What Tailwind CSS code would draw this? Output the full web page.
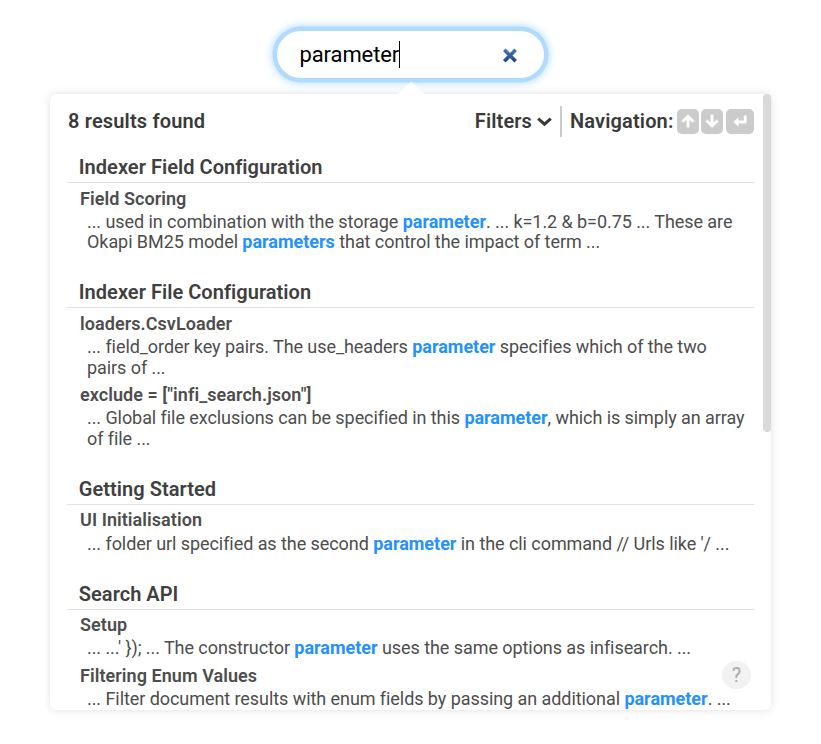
<!DOCTYPE html>
<html lang="en">
<head>
<meta charset="utf-8">
<title>Search</title>
<script src="https://cdn.jsdelivr.net/npm/@tailwindcss/browser@4"></script>
</head>
<body class="h-[744px] overflow-hidden bg-white font-[Roboto,sans-serif] text-[#4d4d4d]">
<div class="flex flex-col items-center pt-[31px]">
  <div class="flex h-[47px] w-[267px] items-center justify-between rounded-full bg-white pr-[26px] pl-[22.5px] shadow-[0_0_0_4.5px_#b0dbff,0_0_8px_5px_#b0dbff]">
    <div class="flex items-center text-[22px] text-black"><span class="tracking-[-0.1px]">parameter</span><span class="h-[27px] w-px bg-black"></span></div>
    <svg class="h-4 w-4" viewBox="0 0 16 16" fill="none"><defs><linearGradient id="g" x1="0" y1="0" x2="0" y2="16" gradientUnits="userSpaceOnUse"><stop stop-color="#4a80c8"/><stop offset="1" stop-color="#233f78"/></linearGradient></defs><path d="M2.3 2.8 13.7 14.2M13.7 2.8 2.3 14.2" stroke="url(#g)" stroke-width="3.7"/></svg>
  </div>
</div>
<main class="relative mt-4 ml-[50px] h-[616px] w-[721px] rounded-md bg-white shadow-[0_0_8px_rgba(0,0,0,0.13)]">
  <svg class="absolute -top-3 left-[348px] h-3 w-[26px]" viewBox="0 0 26 12"><path d="M0 12 11.5 1Q13 -.5 14.5 1L26 12Z" fill="#fff"/></svg>
  <div class="absolute top-0 right-0 h-[338px] w-2 rounded-full bg-[#d9d9d9]"></div>
  <div class="h-full overflow-hidden rounded-md pr-[17px] pl-[17px]">
    <header class="flex h-[54px] items-center justify-between pl-px text-[20px] font-semibold text-[#3a3a3a]">
      <span class="tracking-[0.16px]">8 results found</span>
      <div class="flex items-center">
        <span class="tracking-[0.12px]">Filters</span>
        <svg class="mt-[2px] ml-[5px] h-[10px] w-[15px]" viewBox="0 0 15 10" fill="none" stroke="#3a3a3a" stroke-width="3"><path d="M1.2 1.7 7.5 7.2 13.8 1.7"/></svg>
        <span class="ml-[8px] h-[31px] w-[2px] bg-[#c9c9c9]"></span>
        <span class="ml-[8px] tracking-[0.14px]">Navigation:</span>
        <span class="ml-[3.5px] flex h-[25px] w-[22px] items-center justify-center rounded-[5px] bg-[#cbcbcb]"><svg class="h-[14px] w-[14px]" viewBox="0 0 14 14" fill="none" stroke="#fff" stroke-width="2.8"><path d="M7 13.5V2.5M1.5 7.8 7 2.3l5.5 5.5"/></svg></span>
        <span class="ml-[2px] flex h-[25px] w-[22px] items-center justify-center rounded-[5px] bg-[#cbcbcb]"><svg class="h-[14px] w-[14px]" viewBox="0 0 14 14" fill="none" stroke="#fff" stroke-width="2.8"><path d="M7 .5v11.2M1.5 6.4 7 11.9l5.5-5.5"/></svg></span>
        <span class="ml-[3px] flex h-[25px] w-[28px] items-center justify-center rounded-[5px] bg-[#cbcbcb]"><svg class="h-[12px] w-[14px]" viewBox="0 0 14 12"><path d="M12.2 .5v6.5H4" fill="none" stroke="#fff" stroke-width="2.8"/><path d="M0.3 7 5.5 2.2v9.6Z" fill="#fff"/></svg></span>
      </div>
    </header>

    <section class="-mt-[18.5px]">
      <h2 class="border-b border-[#e1e1e1] pt-[26.5px] pb-[3px] pl-[11.8px] text-[20px] leading-[23px] font-semibold tracking-[0.04px] text-[#404040]">Indexer Field Configuration</h2>
      <div class="pt-[5.5px] pb-[1.8px] pl-[13px] text-[18px] leading-[20.7px]">
        <h3 class="font-semibold tracking-[0.06px]">Field Scoring</h3>
        <p class="pt-[2.3px] pl-[7px] tracking-[-0.065px]">... used in combination with the storage <b class="font-bold tracking-[-0.02px] text-[#2491ff]">parameter</b>. ... k=1.2 &amp; b=0.75 ... These are<br>Okapi BM25 model <b class="font-bold tracking-[-0.02px] text-[#2491ff]">parameters</b> that control the impact of term ...</p>
      </div>
    </section>
    <section>
      <h2 class="border-b border-[#e1e1e1] pt-[26.5px] pb-[3px] pl-[11.8px] text-[20px] leading-[23px] font-semibold tracking-[0.04px] text-[#404040]">Indexer File Configuration</h2>
      <div class="pt-[5.5px] pb-[1.4px] pl-[13px] text-[18px] leading-[20.7px]">
        <h3 class="font-semibold tracking-[0.06px]">loaders.CsvLoader</h3>
        <p class="pt-[2.7px] pl-[7px] tracking-[-0.07px]">... field_order key pairs. The use_headers <b class="font-bold tracking-[-0.02px] text-[#2491ff]">parameter</b> specifies which of the two<br>pairs of ...</p>
      </div>
      <div class="pt-[5.5px] pb-[1.8px] pl-[13px] text-[18px] leading-[20.7px]">
        <h3 class="font-semibold tracking-[0.06px]">exclude = ["infi_search.json"]</h3>
        <p class="pt-[2.3px] pl-[7px] tracking-[-0.07px]">... Global file exclusions can be specified in this <b class="font-bold tracking-[-0.02px] text-[#2491ff]">parameter</b>, which is simply an array<br>of file ...</p>
      </div>
    </section>
    <section>
      <h2 class="border-b border-[#e1e1e1] pt-[26.5px] pb-[3px] pl-[11.8px] text-[20px] leading-[23px] font-semibold tracking-[0.04px] text-[#404040]">Getting Started</h2>
      <div class="pt-[4.8px] pb-[1.8px] pl-[13px] text-[18px] leading-[20.7px]">
        <h3 class="font-semibold tracking-[0.06px]">UI Initialisation</h3>
        <p class="pt-[3px] pl-[7px] tracking-[-0.065px]">... folder url specified as the second <b class="font-bold tracking-[-0.02px] text-[#2491ff]">parameter</b> in the cli command // Urls like '/ ...</p>
      </div>
    </section>
    <section>
      <h2 class="border-b border-[#e1e1e1] pt-[26.5px] pb-[3px] pl-[11.8px] text-[20px] leading-[23px] font-semibold tracking-[0.04px] text-[#404040]">Search API</h2>
      <div class="pt-[5.5px] pb-[1.8px] pl-[13px] text-[18px] leading-[20.7px]">
        <h3 class="font-semibold tracking-[0.06px]">Setup</h3>
        <p class="pt-[2.3px] pl-[7px] tracking-[-0.065px]">... ...' }); ... The constructor <b class="font-bold tracking-[-0.02px] text-[#2491ff]">parameter</b> uses the same options as infisearch. ...</p>
      </div>
      <div class="pt-[5.5px] pb-[1.8px] pl-[13px] text-[18px] leading-[20.7px]">
        <h3 class="font-semibold tracking-[0.06px]">Filtering Enum Values</h3>
        <p class="pt-[2.3px] pl-[7px] tracking-[-0.065px]">... Filter document results with enum fields by passing an additional <b class="font-bold tracking-[-0.02px] text-[#2491ff]">parameter</b>. ...</p>
      </div>
    </section>
  </div>
  <div class="absolute right-5 bottom-[21px] flex h-7 w-[29px] items-center justify-center rounded-full bg-[#f2f2f2] text-[20px] leading-none text-[#aaa]">?</div>
</main>
</body>
</html>
